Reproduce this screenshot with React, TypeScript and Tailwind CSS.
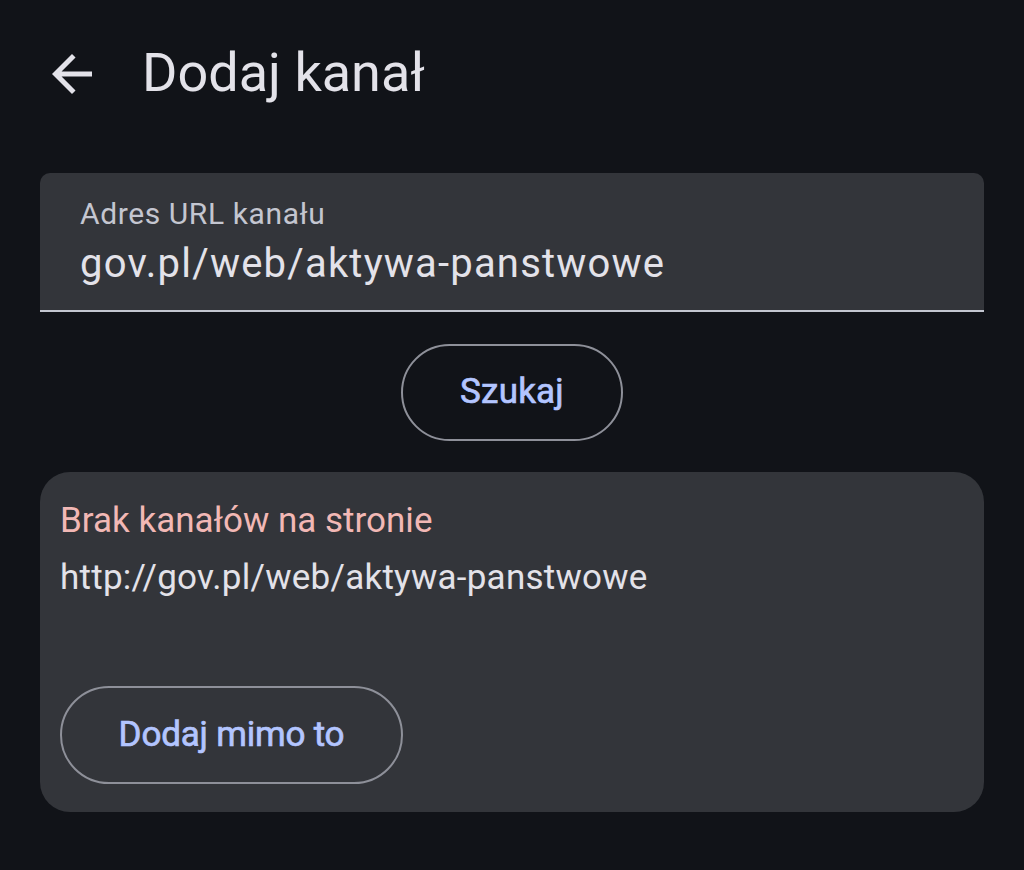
const url = "gov.pl/web/aktywa-panstwowe";

function BackArrow() {
  return (
    <svg viewBox="0 0 24 24" width={60} height={60} fill="currentColor">
      <path d="M20 11H7.83l5.59-5.59L12 4l-8 8 8 8 1.41-1.41L7.83 13H20v-2z" />
    </svg>
  );
}

export default function App() {
  return (
    <div className="min-h-[870px] w-full bg-[#111318] font-['Roboto',sans-serif] text-[#e3e2e9]">
      {/* TOP BAR */}
      <div className="flex h-[147px] items-center">
        <button className="ml-[42px] flex h-[60px] w-[60px] items-center justify-center text-[#e3e2e9]">
          <BackArrow />
        </button>
        <h1 className="ml-[40px] pb-[2px] text-[54px] leading-none">
          Dodaj kanał
        </h1>
      </div>

      <div className="flex flex-col px-[40px] pt-[26px]">
        {/* URL FIELD */}
        <div className="h-[139px] rounded-t-[10px] border-b-[2px] border-[#c4c6d0] bg-[#33353a] px-[40px] pt-[22px]">
          <div className="text-[30px] leading-[38px] tracking-[0.6px] text-[#c4c6d0]">
            Adres URL kanału
          </div>
          <div className="mt-[4px] text-[40px] leading-[54px] tracking-[1.2px] text-[#e3e2e9]">
            {url}
          </div>
        </div>

        {/* SEARCH */}
        <div className="flex justify-center pt-[32px] pb-[31px]">
          <button className="flex h-[97px] w-[222px] items-center justify-center rounded-full border-[2.5px] border-[#8e9099] text-[35px] font-normal tracking-[0.2px] text-[#b3c5ff] [-webkit-text-stroke:0.7px_#b3c5ff]">
            Szukaj
          </button>
        </div>

        {/* RESULT CARD */}
        <div className="flex h-[340px] flex-col rounded-[30px] bg-[#33353a] px-[20px] pt-[26px]">
          <div className="text-[35px] leading-[46px] text-[#f2b8b5]">
            Brak kanałów na stronie
          </div>
          <div className="mt-[11px] text-[35px] leading-[46px] tracking-[0.25px] text-[#e3e2e9]">
            http://{url}
          </div>
          <div className="mt-[85px]">
            <button className="flex h-[98px] w-[343px] items-center justify-center rounded-full border-[2.5px] border-[#8e9099] text-[35px] font-normal tracking-[-0.2px] text-[#b3c5ff] [-webkit-text-stroke:0.7px_#b3c5ff]">
              Dodaj mimo to
            </button>
          </div>
        </div>
      </div>
    </div>
  );
}
